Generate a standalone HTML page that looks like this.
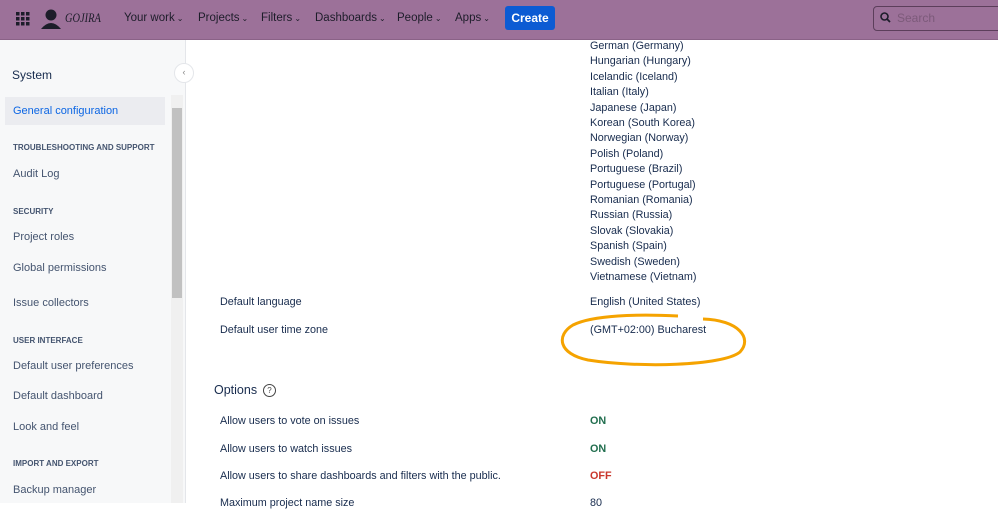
<!DOCTYPE html><html><head><style>
body{margin:0;width:998px;height:503px;overflow:hidden;font-family:"Liberation Sans",sans-serif;background:#fff;position:relative;color:#172b4d}
.top{position:absolute;left:0;top:0;width:998px;height:39px;background:#9c7199;border-bottom:1px solid #8a6287}
.nav{position:absolute;top:12px;font-size:11.5px;color:#1d1d2a}
.nav small{font-size:8px;margin-left:2px}
.side{position:absolute;left:0;top:40px;width:185px;height:463px;background:#f7f8f9;border-right:1px solid #e4e6ea}
.s{position:absolute;left:13px;font-size:11px;color:#44546f}
.h{position:absolute;left:13px;font-size:8px;font-weight:bold;color:#44546f}
.t{position:absolute;font-size:10.8px;color:#172b4d}
</style></head><body>
<div class="top">
<svg style="position:absolute;left:16px;top:12px" width="14" height="14"><g fill="#1d1d2a"><rect x="0" y="0" width="3.5" height="3.5"/><rect x="5" y="0" width="3.5" height="3.5"/><rect x="10" y="0" width="3.5" height="3.5"/><rect x="0" y="5" width="3.5" height="3.5"/><rect x="5" y="5" width="3.5" height="3.5"/><rect x="10" y="5" width="3.5" height="3.5"/><rect x="0" y="10" width="3.5" height="3.5"/><rect x="5" y="10" width="3.5" height="3.5"/><rect x="10" y="10" width="3.5" height="3.5"/></g></svg>
<svg style="position:absolute;left:40px;top:8px" width="22" height="22"><circle cx="11" cy="7" r="5.5" fill="#1d1d2a"/><path d="M1 21 Q11 9 21 21Z" fill="#1d1d2a"/></svg>
<div style="position:absolute;left:65px;top:10px;font-size:13px;font-family:'Liberation Serif';font-style:italic;color:#1d1d2a;transform:scaleX(0.8);transform-origin:left">GOJIRA</div>
<div class="nav" style="left:124px">Your work<small>⌄</small></div>
<div class="nav" style="left:198px">Projects<small>⌄</small></div>
<div class="nav" style="left:261px">Filters<small>⌄</small></div>
<div class="nav" style="left:315px">Dashboards<small>⌄</small></div>
<div class="nav" style="left:397px">People<small>⌄</small></div>
<div class="nav" style="left:455px">Apps<small>⌄</small></div>
<div style="position:absolute;left:505px;top:6px;width:50px;height:24px;background:#0c5bd3;border-radius:3px;color:#fff;font-size:12px;font-weight:bold;text-align:center;line-height:24px">Create</div>
<div style="position:absolute;left:873px;top:6px;width:130px;height:23px;border:1.5px solid #5c3e5b;border-radius:4px"></div>
<svg style="position:absolute;left:880px;top:12px" width="11" height="11"><circle cx="4.5" cy="4.5" r="3.5" stroke="#1d1d2a" stroke-width="1.6" fill="none"/><path d="M7 7L10 10" stroke="#1d1d2a" stroke-width="1.8"/></svg>
<div style="position:absolute;left:897px;top:11px;font-size:12px;color:#7c5a7a">Search</div>
</div>
<div class="side">
<div style="position:absolute;left:12px;top:28px;font-size:12px;color:#172b4d">System</div>
<div style="position:absolute;left:5px;top:57px;width:160px;height:28px;background:#ebecf0"></div>
<div class="s" style="top:65px;color:#0c66e4">General configuration</div>
<div class="h" style="top:103px">TROUBLESHOOTING AND SUPPORT</div>
<div class="s" style="top:128px">Audit Log</div>
<div class="h" style="top:167px">SECURITY</div>
<div class="s" style="top:191px">Project roles</div>
<div class="s" style="top:222px">Global permissions</div>
<div class="s" style="top:257px">Issue collectors</div>
<div class="h" style="top:296px">USER INTERFACE</div>
<div class="s" style="top:320px">Default user preferences</div>
<div class="s" style="top:350px">Default dashboard</div>
<div class="s" style="top:381px">Look and feel</div>
<div class="h" style="top:419px">IMPORT AND EXPORT</div>
<div class="s" style="top:444px">Backup manager</div>
<div style="position:absolute;left:171px;top:55px;width:12px;height:408px;background:#f0f0f0"></div>
<div style="position:absolute;left:172px;top:68px;width:10px;height:190px;background:#c1c1c1"></div>
</div>
<div style="position:absolute;left:174px;top:63px;width:18px;height:18px;border-radius:50%;background:#fff;border:1px solid #e4e6ea;font-size:9px;color:#888;text-align:center;line-height:17px">‹</div>
<div class="t" style="left:590px;top:39px;line-height:15.4px">German (Germany)<br>Hungarian (Hungary)<br>Icelandic (Iceland)<br>Italian (Italy)<br>Japanese (Japan)<br>Korean (South Korea)<br>Norwegian (Norway)<br>Polish (Poland)<br>Portuguese (Brazil)<br>Portuguese (Portugal)<br>Romanian (Romania)<br>Russian (Russia)<br>Slovak (Slovakia)<br>Spanish (Spain)<br>Swedish (Sweden)<br>Vietnamese (Vietnam)</div>
<div class="t" style="left:220px;top:296px">Default language</div>
<div class="t" style="left:590px;top:296px">English (United States)</div>
<div class="t" style="left:220px;top:324px">Default user time zone</div>
<div class="t" style="left:590px;top:324px">(GMT+02:00) Bucharest</div>
<svg style="position:absolute;left:558px;top:310px" width="195" height="60"><path d="M145 9 C180 10 195 28 182 42 C165 56 80 58 30 50 C0 44 -2 25 15 15 C35 5 80 4 120 6" stroke="#f5a300" stroke-width="3" fill="none"/></svg>
<div style="position:absolute;left:214px;top:383px;font-size:12.5px;color:#172b4d">Options</div>
<div style="position:absolute;left:263px;top:384px;width:11px;height:11px;border:1px solid #444;border-radius:50%;font-size:8px;text-align:center;line-height:11px;color:#444">?</div>
<div class="t" style="left:220px;top:415px">Allow users to vote on issues</div>
<div class="t" style="left:590px;top:415px;color:#216e4e;font-weight:bold">ON</div>
<div class="t" style="left:220px;top:443px">Allow users to watch issues</div>
<div class="t" style="left:590px;top:443px;color:#216e4e;font-weight:bold">ON</div>
<div class="t" style="left:220px;top:470px">Allow users to share dashboards and filters with the public.</div>
<div class="t" style="left:590px;top:470px;color:#c9372c;font-weight:bold">OFF</div>
<div class="t" style="left:220px;top:497px">Maximum project name size</div>
<div class="t" style="left:590px;top:497px">80</div>
</body></html>
